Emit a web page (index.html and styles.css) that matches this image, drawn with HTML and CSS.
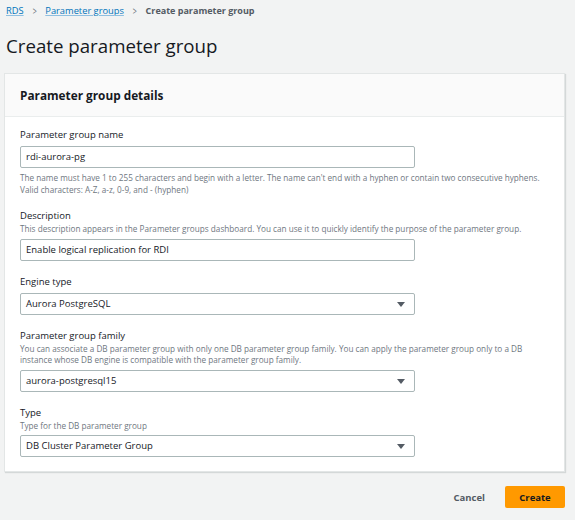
FILE: index.html
```html
<!DOCTYPE html>
<html lang="en">
<head>
  <meta charset="UTF-8" />
  <title>Create parameter group</title>
  <link rel="stylesheet" href="styles.css">
</head>
<body>

  <div class="breadcrumbs">
    <a href="#" class="crumb-link">RDS</a>
    <span class="crumb-sep">&gt;</span>
    <a href="#" class="crumb-link">Parameter groups</a>
    <span class="crumb-sep">&gt;</span>
    <span class="crumb-current">Create parameter group</span>
  </div>

  <h1 class="page-title">Create parameter group</h1>

  <div class="panel">
    <div class="panel-header">Parameter group details</div>
    <div class="panel-body">

      <div class="field">
        <div class="label">Parameter group name</div>
        <div class="input">rdi-aurora-pg</div>
        <div class="hint hint-after">The name must have 1 to 255 characters and begin with a letter. The name can't end with a hyphen or contain two consecutive hyphens.<br>Valid characters: A-Z, a-z, 0-9, and - (hyphen)</div>
      </div>

      <div class="field">
        <div class="label">Description</div>
        <div class="hint">This description appears in the Parameter groups dashboard. You can use it to quickly identify the purpose of the parameter group.</div>
        <div class="input">Enable logical replication for RDI</div>
      </div>

      <div class="field">
        <div class="label">Engine type</div>
        <div class="input select">Aurora PostgreSQL<span class="caret"></span></div>
      </div>

      <div class="field">
        <div class="label">Parameter group family</div>
        <div class="hint">You can associate a DB parameter group with only one DB parameter group family. You can apply the parameter group only to a DB<br>instance whose DB engine is compatible with the parameter group family.</div>
        <div class="input select">aurora-postgresql15<span class="caret"></span></div>
      </div>

      <div class="field">
        <div class="label">Type</div>
        <div class="hint">Type for the DB parameter group</div>
        <div class="input select">DB Cluster Parameter Group<span class="caret"></span></div>
      </div>

    </div>
  </div>

  <div class="actions">
    <button class="btn btn-link">Cancel</button>
    <button class="btn btn-primary">Create</button>
  </div>

</body>
</html>
```

FILE: styles.css
```css
html, body {
  margin: 0;
  padding: 0;
  height: 100%;
}
body {
  background: #f2f3f3;
  font-family: "Open Sans", "Noto Sans", Arial, sans-serif;
  color: #16191f;
  box-sizing: border-box;
}
.breadcrumbs {
  display: flex;
  align-items: center;
  gap: 8px;
  padding: 4px 0 0 6px;
  height: 14px;
  font-size: 9.3px;
  line-height: 14px;
}
.crumb-link {
  color: #0073bb;
  text-decoration: underline;
  text-decoration-color: #8fbfe0;
}
.crumb-sep {
  color: #687078;
  font-size: 10px;
  transform: scaleX(0.7);
}
.crumb-current {
  color: #545b64;
  font-weight: bold;
  font-size: 9px;
}
.page-title {
  margin: 15px 0 0 6px;
  font-size: 18.7px;
  line-height: 26px;
  font-weight: normal;
  color: #16191f;
}
.panel {
  margin: 14px 10px 0 4px;
  background: #fff;
  border: 1px solid #e3e6e6;
  box-shadow: 1px 1px 1px rgba(0, 22, 22, 0.12);
}
.panel-header {
  background: #fafafa;
  border-bottom: 1px solid #eaeded;
  height: 43px;
  line-height: 43px;
  padding: 0 15px;
  font-size: 11.8px;
  font-weight: bold;
  box-sizing: border-box;
}
.panel-body {
  padding: 11px 15px 14px 15px;
  display: flex;
  flex-direction: column;
  gap: 14px;
}
.field {
  display: flex;
  flex-direction: column;
}
.label {
  font-size: 9.5px;
  line-height: 14px;
}
.hint {
  font-size: 8.2px;
  line-height: 11.5px;
  color: #6f777f;
  margin-bottom: 2px;
  white-space: nowrap;
}
.hint-after {
  margin: 4px 0 0 0;
}
.input {
  position: relative;
  width: 395px;
  height: 22px;
  box-sizing: border-box;
  border: 1px solid #aab7b8;
  border-radius: 2px;
  padding: 0 5px;
  font-size: 9.5px;
  line-height: 20px;
  margin-top: 2px;
}
.label + .input {
  margin-top: 4px;
}
.caret {
  position: absolute;
  right: 9px;
  top: 8px;
  width: 0;
  height: 0;
  border-left: 4px solid transparent;
  border-right: 4px solid transparent;
  border-top: 5px solid #545b64;
}
.actions {
  display: flex;
  justify-content: flex-end;
  align-items: center;
  gap: 8px;
  margin: 14px 10px 0 0;
}
.btn {
  font-family: "Open Sans", "Noto Sans", Arial, sans-serif;
  font-size: 9.5px;
  font-weight: bold;
  height: 22px;
  border: none;
  border-radius: 2px;
  cursor: pointer;
}
.btn-link {
  background: none;
  color: #545b64;
  padding: 0 12px;
}
.btn-primary {
  background: #ff9900;
  color: #16191f;
  width: 60px;
}
```
